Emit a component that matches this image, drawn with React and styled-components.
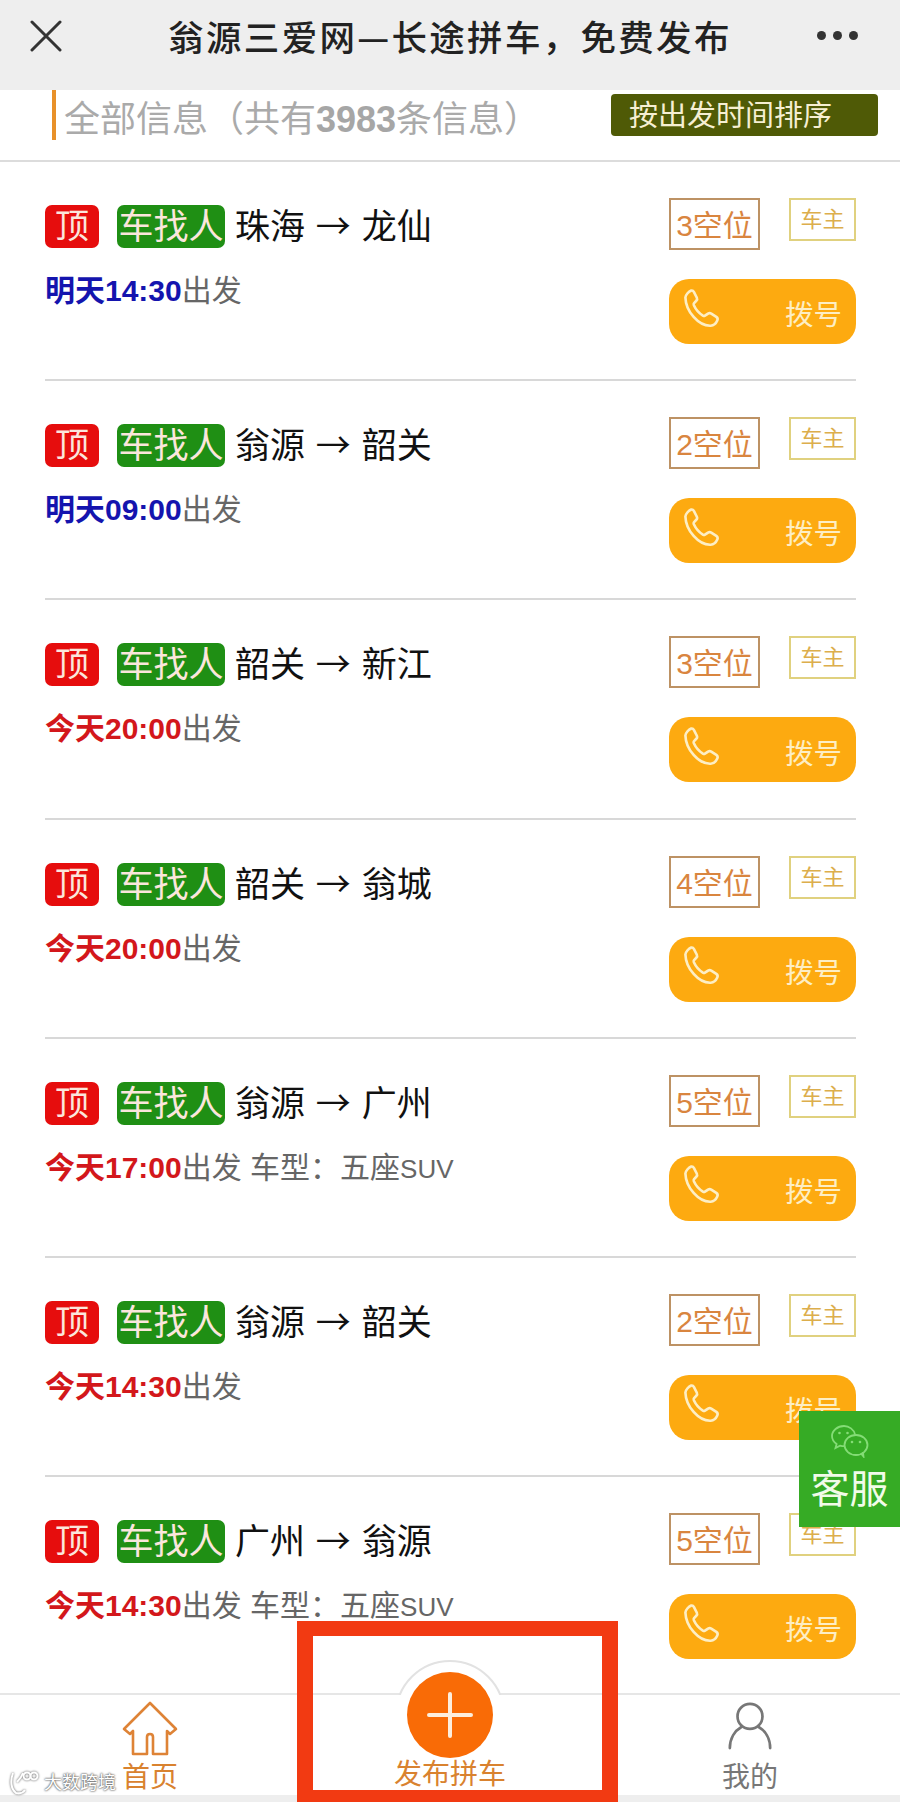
import React from 'react';
import styled, { createGlobalStyle } from 'styled-components';

const Global = createGlobalStyle`
  html, body { margin: 0; padding: 0; background: #fff; }
  body { font-family: "Liberation Sans", "Noto Sans CJK SC", sans-serif; }
  * { box-sizing: border-box; }
`;

const Page = styled.div`
  position: relative;
  width: 900px;
  height: 1802px;
  overflow: hidden;
  background: #fff;
`;

const NavBar = styled.header`
  height: 90px;
  background: #eeeeee;
  display: flex;
  align-items: center;
  justify-content: space-between;
  padding: 0 42px 19px 30px;
`;

const NavTitle = styled.h1`
  margin: 0 0 0 21px;
  font-family: "Noto Sans CJK SC", sans-serif;
  font-size: 35.5px;
  font-weight: 500;
  letter-spacing: 2.3px;
  color: #222;
  white-space: nowrap;
`;

const MoreDots = styled.div`
  display: flex;
  gap: 7px;
  & > i { width: 9px; height: 9px; border-radius: 50%; background: #333; }
`;

const SummaryBar = styled.section`
  height: 72px;
  padding: 0 22px 0 52px;
  border-bottom: 2px solid #dcdcdc;
  display: flex;
  align-items: flex-start;
  justify-content: space-between;
`;

const SummaryText = styled.div`
  height: 50px;
  border-left: 4px solid #e8912a;
  padding-left: 8px;
  font-size: 36px;
  line-height: 60px;
  color: #aaaaaa;
  white-space: nowrap;
  & > b { font-weight: 700; color: #a6a6a6; }
`;

const SortButton = styled.button`
  width: 267px;
  height: 42px;
  margin-top: 4px;
  padding: 0 0 0 18px;
  border: 0;
  border-radius: 4px;
  background: #4f5a06;
  color: #f6efd2;
  font: 400 29px/45px "Liberation Sans", "Noto Sans CJK SC", sans-serif;
  text-align: left;
  white-space: nowrap;
`;

const List = styled.main`
  padding: 0 44px 0 45px;
`;

const Row = styled.article`
  height: 219.2px;
  border-bottom: 2px solid #d8d8d8;
  display: flex;
  justify-content: space-between;
  align-items: flex-start;
`;

const RowLeft = styled.div`
  padding-top: 43px;
`;

const RouteLine = styled.div`
  display: flex;
  align-items: center;
  height: 43px;
`;

const Badge = styled.span`
  height: 43px;
  width: ${(p) => p.$w}px;
  margin-right: ${(p) => p.$mr}px;
  border-radius: 7px;
  background: ${(p) => p.$bg};
  color: #fbe6dc;
  font-size: ${(p) => p.$fs}px;
  line-height: 43px;
  text-align: center;
  white-space: nowrap;
`;

const Route = styled.span`
  font-family: "Noto Sans CJK SC", sans-serif;
  font-size: 35px;
  line-height: 38px;
  height: 43px;
  word-spacing: 3px;
  color: #111;
  white-space: pre;
`;

const Meta = styled.div`
  margin-top: 26px;
  font-size: 30px;
  line-height: 34px;
  color: #666;
  white-space: pre;
`;

const When = styled.b`
  font-weight: 700;
  color: ${(p) => p.$c};
`;

const Model = styled.span`
  font-size: 26px;
`;

const RowRight = styled.div`
  width: 187px;
  padding-top: 36px;
`;

const Tags = styled.div`
  display: flex;
  justify-content: space-between;
  align-items: flex-start;
`;

const SeatTag = styled.span`
  width: 91px;
  height: 52px;
  border: 2px solid #bd9264;
  color: #d9853f;
  font-size: 30px;
  line-height: 52px;
  text-align: center;
  white-space: nowrap;
`;

const OwnerTag = styled.span`
  width: 67px;
  height: 43px;
  border: 2px solid #e0d17f;
  color: #dcae4c;
  font-size: 22px;
  line-height: 40px;
  text-align: center;
  white-space: nowrap;
`;

const DialButton = styled.button`
  width: 187px;
  height: 65px;
  margin-top: 29px;
  padding: 0 14px 0 12px;
  border: 0;
  border-radius: 20px;
  background: #fdaa10;
  color: #fdeec4;
  display: flex;
  align-items: center;
  justify-content: space-between;
  font: 400 28.5px/1 "Liberation Sans", "Noto Sans CJK SC", sans-serif;
  & > span { padding-top: 8px; }
`;

const PhoneIcon = () => (
  <svg width="44" height="44" viewBox="0 0 40 40" fill="none" stroke="#fdeec4" strokeWidth="2.4" strokeLinejoin="round" style={{ marginTop: -6 }}>
    <path d="M4 9.500c0-2 3-5.500 5.200-6.200 1.200-.3 2 .2 2.600 1.300l2.600 5.200c.5 1 .3 1.900-.5 2.700l-2 2.100c-.5.6-.5 1.200-.2 2 1.800 4 4.400 7 8.200 9.500.7.400 1.300.400 1.900 0l2.800-1.900c1-.6 1.900-.6 2.900 0l4.600 3c1.200.9 1.500 2 .9 3.300-1 2.300-3.500 4.600-6 4.700C16 35.700 4.300 22 4 9.500z" />
  </svg>
);

const FloatingService = styled.aside`
  position: absolute;
  left: 799px;
  top: 1411px;
  width: 101px;
  height: 116px;
  background: #36ab25;
  color: #f1fbe9;
  display: flex;
  flex-direction: column;
  align-items: center;
  padding-top: 14px;
  font-size: 39px;
  line-height: 50px;
  & > span { margin-top: 7px; }
`;

const WeChatIcon = () => (
  <svg width="38" height="33" viewBox="0 0 38 33" fill="none" stroke="#84dc76" strokeWidth="1.8">
    <path d="M24 9.500C23 4.500 18 1 13 1 6.500 1 1 5.500 1 11c0 3.300 1.800 6 4.600 8L4.500 23l4.500-2.400c1.400.4 2.700.6 4 .6" />
    <ellipse cx="25" cy="20" rx="11.500" ry="10" fill="#36ab25" />
    <path d="M30 28.500l2.500 3-.5-4.500" />
    <circle cx="8.500" cy="8" r="1.300" fill="#84dc76" stroke="none" />
    <circle cx="16.500" cy="8" r="1.300" fill="#84dc76" stroke="none" />
    <circle cx="21" cy="17" r="1.300" fill="#84dc76" stroke="none" />
    <circle cx="29" cy="17" r="1.300" fill="#84dc76" stroke="none" />
  </svg>
);

const TabBar = styled.nav`
  position: absolute;
  left: 0;
  right: 0;
  bottom: 0;
  height: 109px;
  background: #fff;
  border-top: 2px solid #e6e6e6;
  display: grid;
  grid-template-columns: 300px 300px 300px;
  &::after {
    content: '';
    position: absolute;
    left: 0;
    right: 0;
    bottom: 0;
    height: 7px;
    background: #eeeeee;
  }
`;

const Tab = styled.div`
  height: ${(p) => p.$h}px;
  display: flex;
  flex-direction: column;
  align-items: center;
  justify-content: flex-end;
  color: ${(p) => p.$c};
  font-size: 28px;
  line-height: 38px;
  white-space: nowrap;
`;

const TabIconSlot = styled.div`
  height: 62px;
  padding-bottom: ${(p) => p.$pb || 0}px;
  display: flex;
  align-items: flex-end;
  justify-content: center;
`;

const PlusSlot = styled.div`
  position: relative;
  height: 62px;
  width: 86px;
`;

const PlusArc = styled.div`
  position: absolute;
  left: -12px;
  top: -35px;
  width: 110px;
  height: 110px;
  border-radius: 50%;
  background: #fff;
  border: 2px solid #e2e2e2;
  clip-path: inset(0 0 75px 0);
`;

const PlusCircle = styled.div`
  position: absolute;
  left: 0;
  top: -23px;
  width: 86px;
  height: 86px;
  border-radius: 50%;
  background: #f96b06;
  display: flex;
  align-items: center;
  justify-content: center;
`;

const Annotation = styled.div`
  position: absolute;
  left: 297px;
  top: 1621px;
  width: 321px;
  height: 181px;
  border: solid #f23a12;
  border-width: 15px 16px 12px;
`;

const Watermark = styled.div`
  position: absolute;
  left: 8px;
  bottom: 6px;
  display: flex;
  align-items: center;
  gap: 4px;
  color: #fff;
  font-size: 18px;
  line-height: 24px;
  text-shadow: 0 0 2px #555, 0 0 2px #555;
  & > svg { filter: drop-shadow(0 0 1px #555); }
`;

const rows = [
  ['珠海 → 龙仙', 3, '明天14:30', '出发', '#1414ae'],
  ['翁源 → 韶关', 2, '明天09:00', '出发', '#1414ae'],
  ['韶关 → 新江', 3, '今天20:00', '出发', '#d3171b'],
  ['韶关 → 翁城', 4, '今天20:00', '出发', '#d3171b'],
  ['翁源 → 广州', 5, '今天17:00', '出发 车型：五座', '#d3171b', 'SUV'],
  ['翁源 → 韶关', 2, '今天14:30', '出发', '#d3171b'],
  ['广州 → 翁源', 5, '今天14:30', '出发 车型：五座', '#d3171b', 'SUV'],
];

export default function App() {
  return (
    <Page>
      <Global />
      <NavBar>
        <svg width="32" height="32" viewBox="0 0 32 32" stroke="#333" strokeWidth="3" strokeLinecap="round">
          <path d="M2 2l28 28M30 2L2 30" />
        </svg>
        <NavTitle>翁源三爱网—长途拼车，免费发布</NavTitle>
        <MoreDots><i /><i /><i /></MoreDots>
      </NavBar>
      <SummaryBar>
        <SummaryText>全部信息（共有<b>3983</b>条信息）</SummaryText>
        <SortButton>按出发时间排序</SortButton>
      </SummaryBar>
      <List>
        {rows.map(([route, seats, when, rest, color, model], i) => (
          <Row key={i}>
            <RowLeft>
              <RouteLine>
                <Badge $w={54} $mr={18} $fs={34} $bg="#e60d0d">顶</Badge>
                <Badge $w={108} $mr={10} $fs={35} $bg="#1f8f14">车找人</Badge>
                <Route>{route}</Route>
              </RouteLine>
              <Meta><When $c={color}>{when}</When>{rest}{model && <Model>{model}</Model>}</Meta>
            </RowLeft>
            <RowRight>
              <Tags>
                <SeatTag>{seats}空位</SeatTag>
                <OwnerTag>车主</OwnerTag>
              </Tags>
              <DialButton>
                <PhoneIcon />
                <span>拨号</span>
              </DialButton>
            </RowRight>
          </Row>
        ))}
      </List>
      <FloatingService>
        <WeChatIcon />
        <span>客服</span>
      </FloatingService>
      <TabBar>
        <Tab $c="#d9822f" $h={102}>
          <TabIconSlot $pb={2}>
            <svg width="56" height="56" viewBox="0 0 56 56" fill="none" stroke="#de8336" strokeWidth="2.600" strokeLinejoin="round">
              <path d="M28 2L2 28l6 5 3-3v23h14V36c0-2 1-3 3-3s3 1 3 3v17h14V30l3 3 6-5z" />
            </svg>
          </TabIconSlot>
          首页
        </Tab>
        <Tab $c="#d9822f" $h={99}>
          <PlusSlot>
            <PlusArc />
            <PlusCircle>
              <svg width="46" height="46" viewBox="0 0 46 46" stroke="#fdeedd" strokeWidth="4" strokeLinecap="round">
                <path d="M23 2v42M2 23h42" />
              </svg>
            </PlusCircle>
          </PlusSlot>
          发布拼车
        </Tab>
        <Tab $c="#777" $h={102}>
          <TabIconSlot $pb={9}>
            <svg width="46" height="48" viewBox="0 0 46 50" fill="none" stroke="#777" strokeWidth="2.800" strokeLinecap="round">
              <circle cx="23" cy="15" r="13" />
              <path d="M14 26C7 30 2 38 2 48M32 26c7 4 12 12 12 22" />
            </svg>
          </TabIconSlot>
          我的
        </Tab>
      </TabBar>
      <Annotation />
      <Watermark>
        <svg width="32" height="26" viewBox="0 0 30 26" fill="none" stroke="#fff" strokeWidth="2">
          <path d="M4 3c-3 8-2 16 3 20 4 1 7 0 9-3M8 12c3-3 5-6 6-9" />
          <circle cx="18" cy="6" r="3.500" />
          <circle cx="25" cy="6" r="3.500" />
        </svg>
        <span>大数跨境</span>
      </Watermark>
    </Page>
  );
}
